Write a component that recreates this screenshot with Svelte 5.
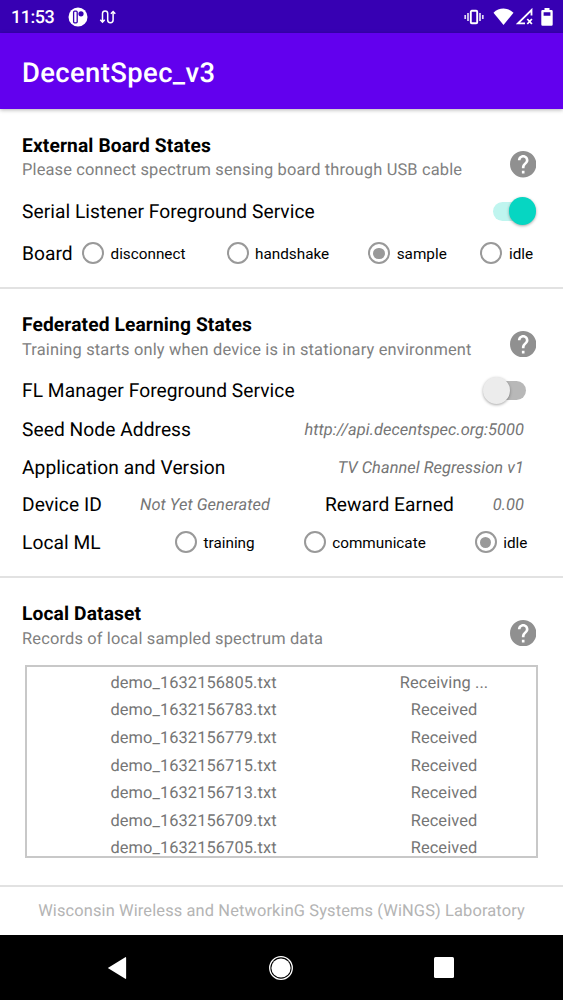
<script>
  const boardStates = ['disconnect', 'handshake', 'sample', 'idle'];
  const mlStates = ['training', 'communicate', 'idle'];
  let board = $state('sample');
  let ml = $state('idle');
  let serialOn = $state(true);
  let managerOn = $state(false);

  const files = [
    ['demo_1632156805.txt', 'Receiving ...'],
    ['demo_1632156783.txt', 'Received'],
    ['demo_1632156779.txt', 'Received'],
    ['demo_1632156715.txt', 'Received'],
    ['demo_1632156713.txt', 'Received'],
    ['demo_1632156709.txt', 'Received'],
    ['demo_1632156705.txt', 'Received']
  ];
</script>

{#snippet head(title, subtitle)}
  <header class="head">
    <div>
      <h2>{title}</h2>
      <p>{subtitle}</p>
    </div>
    <svg class="help" viewBox="2 2 20 20">
      <path fill="#909090" d="M12 2C6.48 2 2 6.48 2 12s4.48 10 10 10 10-4.480 10-10S17.520 2 12 2zm1 17h-2v-2h2v2zm2.070-7.750l-.9.920C13.450 12.900 13 13.500 13 15h-2v-.5c0-1.100.450-2.100 1.170-2.830l1.240-1.260c.370-.360.590-.860.590-1.410 0-1.100-.9-2-2-2s-2 .9-2 2H8c0-2.210 1.790-4 4-4s4 1.790 4 4c0 .880-.360 1.680-.930 2.250z" />
    </svg>
  </header>
{/snippet}

{#snippet radio(label, selected, pick)}
  <button class="radio" onclick={pick}>
    <span class="ring" class:selected></span>
    <span class="label">{label}</span>
  </button>
{/snippet}

<div class="screen">
  <div class="status">
    <span class="clock">11:53</span>
    <svg class="app-dot" viewBox="0 0 20 20" width="20" height="20">
      <circle cx="10" cy="10" r="9.500" fill="#fff" />
      <rect x="5.600" y="4.200" width="3.600" height="11.600" rx="1" fill="none" stroke="#3700b3" stroke-width="1.300" />
      <circle cx="13" cy="6.800" r="2.600" fill="#3700b3" />
    </svg>
    <svg class="route" viewBox="0 0 18 16" width="18" height="16" fill="none" stroke="#fff" stroke-width="1.500">
      <path d="M3.500 12.500V4.500a2.600 2.600 0 0 1 5.200 0v6.500a2.700 2.700 0 0 0 5.400 0V3" />
      <path d="M1.300 10.800l2.200 2.300 2.200-2.300M11.900 4.800l2.200-2.300 2.200 2.300" />
    </svg>
    <svg class="vibrate" viewBox="0 0 20 16" width="20" height="16" fill="none" stroke="#fff">
      <rect x="6.800" y="1.800" width="6.400" height="12.400" rx="1" stroke-width="1.900" />
      <path stroke-width="1.700" d="M4 4v8M16 4v8M1.200 6v4M18.800 6v4" opacity=".85" />
    </svg>
    <svg class="wifi" viewBox="0 0 21 17" width="21" height="17">
      <path fill="#fff" d="M10.500 17L.5 4.700Q4.800.5 10.500.5t10 4.200z" />
    </svg>
    <svg class="signal" viewBox="0 0 17 17" width="17" height="17" fill="none" stroke="#fff" stroke-width="1.800">
      <path d="M15.500 7.500V2L2 15.400h7" />
      <path d="M11.300 11l4.600 5M15.900 11l-4.600 5" />
    </svg>
    <svg class="battery" viewBox="0 0 12 18" width="12" height="18">
      <path fill="#fff" fill-rule="evenodd" d="M3.500 0h5v2H10.500a1.200 1.200 0 0 1 1.200 1.200v13.300a1.200 1.200 0 0 1-1.200 1.200h-9A1.200 1.200 0 0 1 .3 16.500V3.200A1.200 1.200 0 0 1 1.500 2h2zM2.600 4.300v3.400h6.800V4.300z" />
    </svg>
  </div>
  <div class="appbar">DecentSpec_v3</div>

  <section class="board">
    {@render head('External Board States', 'Please connect spectrum sensing board through USB cable')}
    <div class="row service">
      <span>Serial Listener Foreground Service</span>
      <button class="switch" class:on={serialOn} aria-label="Serial Listener" onclick={() => (serialOn = !serialOn)}><i></i></button>
    </div>
    <div class="row board-row">
      <span>Board</span>
      {#each boardStates as s}
        {@render radio(s, board === s, () => (board = s))}
      {/each}
    </div>
  </section>

  <section class="learning">
    {@render head('Federated Learning States', 'Training starts only when device is in stationary environment')}
    <div class="row service">
      <span>FL Manager Foreground Service</span>
      <button class="switch" class:on={managerOn} aria-label="FL Manager" onclick={() => (managerOn = !managerOn)}><i></i></button>
    </div>
    <div class="row split"><span>Seed Node Address</span><em>http://api.decentspec.org:5000</em></div>
    <div class="row split"><span>Application and Version</span><em>TV Channel Regression v1</em></div>
    <div class="row device">
      <span>Device ID</span><em>Not Yet Generated</em>
      <span>Reward Earned</span><em class="end">0.00</em>
    </div>
    <div class="row ml-row">
      <span>Local ML</span>
      {#each mlStates as s}
        {@render radio(s, ml === s, () => (ml = s))}
      {/each}
    </div>
  </section>

  <section class="dataset">
    {@render head('Local Dataset', 'Records of local sampled spectrum data')}
    <div class="list">
      {#each files as [name, state]}
        <div class="file"><span>{name}</span><span>{state}</span></div>
      {/each}
    </div>
  </section>

  <footer>Wisconsin Wireless and NetworkinG Systems (WiNGS) Laboratory</footer>

  <nav>
    <svg viewBox="0 0 20 24" width="20" height="24"><path fill="#fff" d="M.8 12L18.300 1.200q.8-.4.8.6v20.400q0 1-.8.6z" /></svg>
    <svg viewBox="0 0 26 26" width="26" height="26">
      <circle cx="13" cy="13" r="11.300" fill="none" stroke="#fff" stroke-width="1.300" />
      <circle cx="13" cy="13" r="9.600" fill="#fff" />
    </svg>
    <svg viewBox="0 0 20 21" width="20" height="21"><rect width="20" height="21" rx="1.500" fill="#fff" /></svg>
  </nav>
</div>

<style>
  :global(body) { margin: 0; }
  .screen {
    width: 563px;
    height: 1000px;
    display: flex;
    flex-direction: column;
    overflow: hidden;
    background: #fff;
    color: #000;
    font-family: Roboto, sans-serif;
    font-size: 19.2px;
    letter-spacing: 0.05px;
    text-rendering: geometricPrecision;
    white-space: nowrap;
  }
  .screen * { box-sizing: border-box; }
  .status {
    flex: 0 0 33px;
    display: flex;
    align-items: center;
    padding: 0 9px 0 11px;
    background: #3700b3;
    color: #fff;
  }
  .clock { width: 57px; font-size: 18px; font-weight: 500; letter-spacing: -0.500px; padding-top: 2px; }
  .route { margin-left: 11px; }
  .vibrate { margin-left: auto; }
  .wifi { margin-left: 9px; }
  .signal { margin-left: 2px; }
  .battery { margin-left: 8px; margin-right: 1px; }
  .appbar {
    flex: 0 0 76px;
    display: flex;
    align-items: center;
    padding: 3px 22px 0;
    background: #6200ee;
    color: #fff;
    font-size: 27.400px;
    font-weight: 500;
    letter-spacing: 0.4px;
    box-shadow: 0 1px 4px rgba(0, 0, 0, 0.3);
    z-index: 1;
  }
  section { border-bottom: 2px solid #e2e2e2; padding: 24.600px 22px 0; }
  .board { flex: 0 0 180px; }
  .learning { flex: 0 0 289px; }
  .dataset { flex: 0 0 309px; }
  .head { display: flex; justify-content: space-between; padding-right: 5px; height: 49.400px; }
  h2, p { margin: 0; line-height: 24.700px; }
  h2 { font-size: 19.200px; font-weight: 700; letter-spacing: 0.120px; }
  p { font-size: 16.400px; color: #808080; padding-top: 1px; letter-spacing: 0.170px; }
  .help { width: 26.400px; height: 26.400px; margin-top: 17.700px; }
  .row { display: flex; align-items: center; height: 37.500px; }
  .service { margin-top: 7.500px; height: 41.300px; justify-content: space-between; }
  .learning, .dataset { padding-top: 23.900px; }
  em { font-size: 16.400px; color: #757575; padding-top: 1.500px; }
  .split { justify-content: space-between; padding-right: 17px; }
  .device { display: grid; grid-template-columns: 118px 185px 150px 1fr; padding-right: 17px; }
  .end { text-align: right; }
  .board-row { display: grid; height: 43px; grid-template-columns: 60px 144.500px 141.700px 112.300px 1fr; }
  .ml-row { display: grid; grid-template-columns: 153px 128.700px 171px 1fr; }
  button { border: 0; padding: 0; background: none; font: inherit; color: inherit; letter-spacing: inherit; }
  .radio { display: flex; align-items: center; gap: 6.500px; font-size: 15.300px; letter-spacing: 0; text-align: left; }
  .label { padding-top: 1.500px; }
  .ring {
    flex: none;
    width: 22px;
    height: 22px;
    border: 2px solid #999;
    border-radius: 50%;
    display: grid;
    place-items: center;
  }
  .ring.selected::after { content: ''; width: 11.500px; height: 11.500px; border-radius: 50%; background: #999; }
  .switch {
    display: flex;
    align-items: center;
    width: 36px;
    height: 19px;
    margin-right: 15px;
    border-radius: 10px;
    background: #b8b8b8;
  }
  .switch i {
    flex: none;
    width: 27.400px;
    height: 27.400px;
    margin-left: -7.500px;
    border-radius: 50%;
    background: #ececec;
    box-shadow: 0 1px 3px rgba(0, 0, 0, 0.35);
  }
  .switch.on { margin-right: 12px; background: #bff5ef; }
  .switch.on i { margin-left: 15.800px; background: #06d6c2; }
  .list {
    width: 513px;
    height: 193px;
    margin: 13.300px 0 0 3px;
    padding-top: 3px;
    border: 2.500px solid #c8c8c8;
    overflow: hidden;
    color: #757575;
    font-size: 16.400px;
    letter-spacing: 0.100px;
  }
  .file { display: grid; grid-template-columns: 333px 168px; height: 27.600px; align-items: center; text-align: center; }
  footer {
    flex: 0 0 48px;
    display: flex;
    align-items: center;
    justify-content: center;
    color: #b4b4b4;
    font-size: 16.400px;
    letter-spacing: 0.135px;
  }
  nav {
    flex: 0 0 65px;
    display: flex;
    align-items: center;
    justify-content: space-between;
    padding: 0 109px 0 107px;
    background: #000;
  }
</style>
